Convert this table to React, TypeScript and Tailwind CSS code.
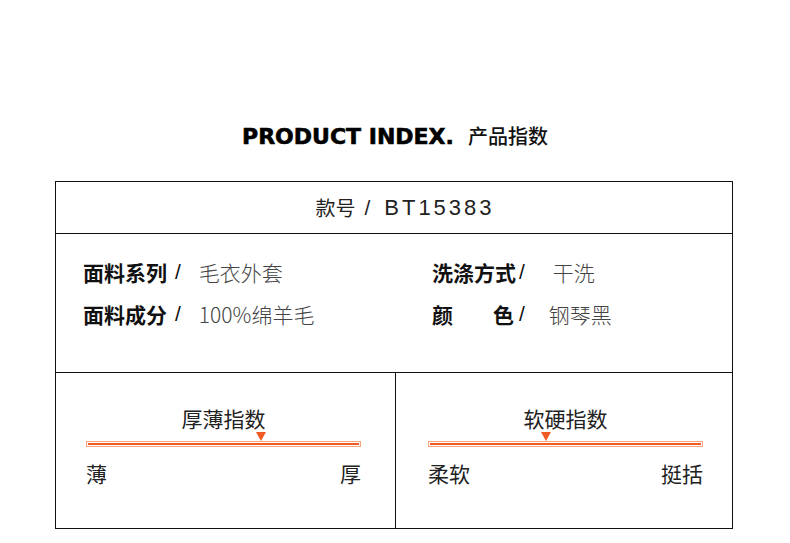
import React from "react";

const cjk = "font-['Noto_Sans_CJK_SC',sans-serif]";

function Spec({
  label,
  value,
  labelW,
  gap,
}: {
  label: React.ReactNode;
  value: string;
  labelW: string;
  gap: string;
}) {
  return (
    <div className="flex items-center h-[26px] text-[21px] leading-[26px]">
      <span className={`${labelW} font-bold text-[#111]`}>{label}</span>
      <span className="text-[#111] font-['Liberation_Sans',sans-serif]">/</span>
      <span className={`${gap} font-light text-[#444]`}>{value}</span>
    </div>
  );
}

function IndexBar({
  title,
  left,
  right,
  marker,
  offset,
}: {
  title: string;
  left: string;
  right: string;
  marker: number;
  offset: string;
}) {
  return (
    <div className={`${offset} w-[275px] pt-[33px]`}>
      <div className="text-center text-[21px] leading-[24px] text-[#222]">{title}</div>
      {/* marker + bar */}
      <div className="relative mt-[2px] pt-[9px]">
        <div
          className="absolute top-0 w-0 h-0 border-l-[5px] border-r-[5px] border-t-[9px] border-l-transparent border-r-transparent border-t-[#f15a22]"
          style={{ left: marker - 5 }}
        />
        <div className="h-[6px] border border-[#f8a57e] p-[1px]">
          <div className="h-[2px] bg-[#f15a22]" />
        </div>
      </div>
      <div className="mt-[14px] flex justify-between text-[21px] leading-[24px] text-[#222]">
        <span>{left}</span>
        <span>{right}</span>
      </div>
    </div>
  );
}

export default function App() {
  return (
    <div className={`w-[790px] h-[543px] bg-white flex flex-col ${cjk}`}>
      {/* heading */}
      <h1 className="mt-[120px] h-[32px] flex items-center justify-center gap-[14px]">
        <span className="font-['DejaVu_Sans',sans-serif] font-bold text-[22px] text-black [-webkit-text-stroke:0.6px_#000]">
          PRODUCT INDEX.
        </span>
        <span className="font-medium text-[20px] text-[#111]">产品指数</span>
      </h1>

      {/* table */}
      <div className="mt-[29px] ml-[55px] w-[678px] border border-[#111]">
        <div className="h-[52px] border-b border-[#111] flex items-center justify-center pl-[22px] text-[#222]">
          <span className="text-[20px]">款号</span>
          <span className="ml-[9px] text-[21px] font-['Liberation_Sans',sans-serif]">/</span>
          <span className="ml-[14px] text-[22px] tracking-[3px] font-['Liberation_Sans',sans-serif]">
            BT15383
          </span>
        </div>

        <div className="h-[139px] border-b border-[#111] grid grid-cols-[349px_1fr] pl-[27px] pt-[25px]">
          <div className="flex flex-col gap-[16px]">
            <Spec label="面料系列" value="毛衣外套" labelW="w-[92px]" gap="ml-[18px]" />
            <Spec label="面料成分" value="100%绵羊毛" labelW="w-[92px]" gap="ml-[18px]" />
          </div>
          <div className="flex flex-col gap-[16px]">
            <Spec label="洗涤方式" value="干洗" labelW="w-[87px]" gap="ml-[28px]" />
            <Spec
              label={
                <span className="flex justify-between w-[82px]">
                  <span>颜</span>
                  <span>色</span>
                </span>
              }
              value="钢琴黑"
              labelW="w-[87px]"
              gap="ml-[24px]"
            />
          </div>
        </div>

        <div className="h-[155px] grid grid-cols-[340px_1fr]">
          <div className="border-r border-[#111]">
            <IndexBar title="厚薄指数" left="薄" right="厚" marker={175} offset="ml-[30px]" />
          </div>
          <div>
            <IndexBar title="软硬指数" left="柔软" right="挺括" marker={118} offset="ml-[32px]" />
          </div>
        </div>
      </div>
    </div>
  );
}
